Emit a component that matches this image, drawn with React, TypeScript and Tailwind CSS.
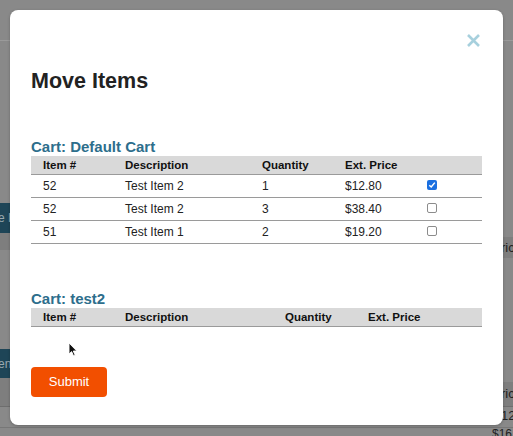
const font = { fontFamily: '"Liberation Sans", Arial, Helvetica, sans-serif' };

const rows = [
  { id: "52", desc: "Test Item 2", qty: "1", price: "$12.80", checked: true },
  { id: "52", desc: "Test Item 2", qty: "3", price: "$38.40", checked: false },
  { id: "51", desc: "Test Item 1", qty: "2", price: "$19.20", checked: false },
];

function CloseIcon() {
  return (
    <svg width="15" height="15" viewBox="0 0 15 15">
      <path d="M2 2 L13 13 M13 2 L2 13" stroke="#a7d0dd" strokeWidth="2.6" strokeLinecap="butt" />
    </svg>
  );
}

function Checkbox({ checked }: { checked: boolean }) {
  if (checked) {
    return (
      <span className="flex h-[10px] w-[10px] items-center justify-center rounded-[2px] bg-[#1a6fe0]">
        <svg width="8" height="8" viewBox="0 0 8 8">
          <path d="M1.3 4.2 L3.2 6 L6.8 1.6" stroke="#fff" strokeWidth="1.5" fill="none" />
        </svg>
      </span>
    );
  }
  return <span className="block h-[10px] w-[10px] rounded-[2px] border border-[#8c8c8c] bg-white" />;
}

function Cursor() {
  return (
    <svg width="11" height="16" viewBox="0 0 11 16" className="absolute left-[68px] top-[342px]">
      <path d="M1 1 L1 12 L3.6 9.6 L5.6 14 L7.2 13.3 L5.3 9 L8.8 9 Z" fill="#111" stroke="#fff" strokeWidth="0.9" />
    </svg>
  );
}

function Backdrop() {
  return (
    <>
      <div className="absolute left-0 right-0 top-[40px] h-px bg-[#9a9a9a]" />
      <div className="absolute left-0 top-[203px] flex h-[30px] w-[12px] items-center overflow-hidden bg-[#1e4557] text-[12px] text-[#9aa9b0]">
        <span className="-ml-[2px] whitespace-nowrap">e It</span>
      </div>
      <div className="absolute left-0 top-[233px] h-[17px] w-[12px] bg-[#7e7e7e]" />
      <div className="absolute left-0 top-[349px] flex h-[29px] w-[12px] items-center overflow-hidden bg-[#1e4557] text-[12px] text-[#9aa9b0]">
        <span className="-ml-[2px] whitespace-nowrap">en</span>
      </div>
      <div className="absolute left-0 top-[378px] h-[28px] w-[12px] bg-[#7e7e7e]" />
      <div className="absolute left-0 right-0 top-[406px] h-px bg-[#6e6e6e]" />
      <div className="absolute right-0 top-[237px] flex h-[21px] w-[12px] items-center overflow-hidden bg-[#7e7e7e] text-[13px] text-[#222]">
        <span className="whitespace-nowrap">ric</span>
      </div>
      <div className="absolute right-0 top-[382px] flex h-[24px] w-[12px] items-center overflow-hidden bg-[#7e7e7e] text-[13px] text-[#222]">
        <span className="whitespace-nowrap">ric</span>
      </div>
      <div className="absolute right-0 top-[406px] flex h-[20px] w-[12px] items-center overflow-hidden text-[13px] text-[#222]">
        <span className="whitespace-nowrap">12</span>
      </div>
      <div className="absolute left-0 right-0 top-[427px] h-px bg-[#777]" />
      <div className="absolute left-[492px] top-[428px] overflow-hidden text-[12px] leading-[12px] text-[#222]">
        <span className="whitespace-nowrap">$16</span>
      </div>
    </>
  );
}

export default function App() {
  return (
    <div className="relative h-[436px] w-[513px] overflow-hidden bg-[#898989]" style={font}>
      <Backdrop />
      <div className="absolute left-[10px] top-[10px] flex h-[415px] w-[493px] flex-col rounded-[8px] bg-white px-[21px] pt-[23px] shadow-[0_1px_3px_rgba(0,0,0,0.25)]">
        <div className="flex justify-end pr-[1px]">
          <CloseIcon />
        </div>
        <h1 className="mt-[20px] text-[21.5px] font-bold leading-[26px] text-[#222]">Move Items</h1>

        <h2 className="mt-[44px] text-[15px] font-bold leading-[18px] text-[#2d6e8c]">Cart: Default Cart</h2>
        <div className="grid grid-cols-[82px_137px_83px_82px_1fr] border-b border-[#9a9a9a] bg-[#d9d9d9] text-[11.5px] font-bold leading-[18px] text-[#111]">
          <div className="pl-3">Item #</div>
          <div className="pl-3">Description</div>
          <div className="pl-3">Quantity</div>
          <div className="pl-3">Ext. Price</div>
          <div />
        </div>
        {rows.map((r, i) => (
          <div
            key={i}
            className="grid h-[23px] grid-cols-[82px_137px_83px_82px_1fr] items-center border-b border-[#9a9a9a] text-[12px] leading-[22px] text-[#222]"
          >
            <div className="pl-3">{r.id}</div>
            <div className="pl-3">{r.desc}</div>
            <div className="pl-3">{r.qty}</div>
            <div className="pl-3">{r.price}</div>
            <div className="-mt-[3px] pl-3">
              <Checkbox checked={r.checked} />
            </div>
          </div>
        ))}

        <h2 className="mt-[46px] text-[15px] font-bold leading-[18px] text-[#2d6e8c]">Cart: test2</h2>
        <div className="grid grid-cols-[82px_160px_83px_1fr] border-b border-[#9a9a9a] bg-[#d9d9d9] text-[11.5px] font-bold leading-[18px] text-[#111]">
          <div className="pl-3">Item #</div>
          <div className="pl-3">Description</div>
          <div className="pl-3">Quantity</div>
          <div className="pl-3">Ext. Price</div>
        </div>

        <button className="mt-[40px] h-[30px] w-[76px] rounded-[4px] bg-[#f24f00] text-[13px] text-white">
          Submit
        </button>
      </div>
      <Cursor />
    </div>
  );
}
